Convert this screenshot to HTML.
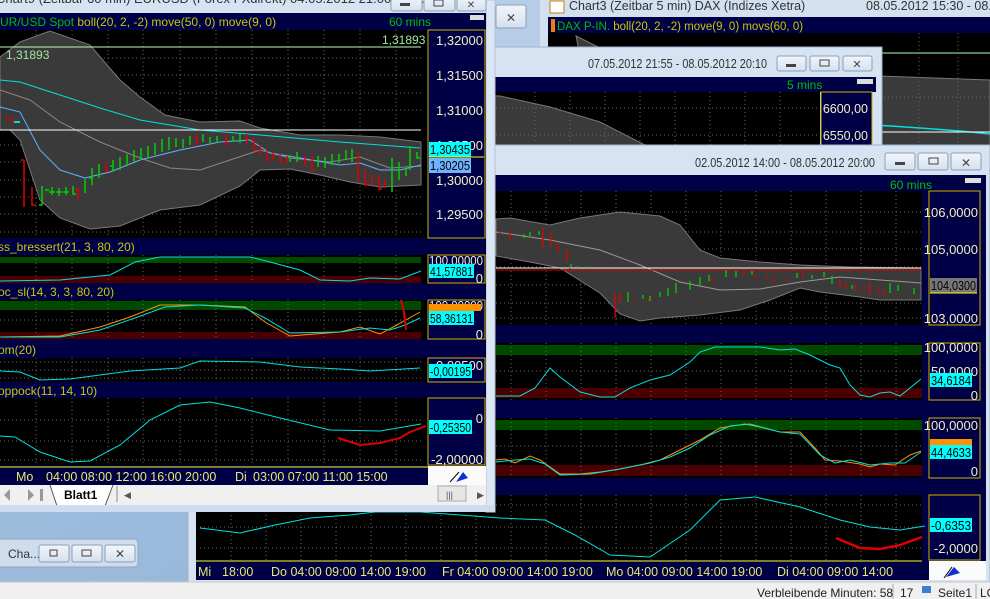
<!DOCTYPE html>
<html><head><meta charset="utf-8"><style>
html,body{margin:0;padding:0;width:990px;height:599px;overflow:hidden;background:#9fbddc}
svg{display:block;font-family:"Liberation Sans",sans-serif}
</style></head><body>
<svg width="990" height="599" viewBox="0 0 990 599" xmlns="http://www.w3.org/2000/svg">
<defs>
<linearGradient id="desk" x1="0" y1="0" x2="1" y2="1"><stop offset="0" stop-color="#a9c5e3"/><stop offset="1" stop-color="#8fb0d4"/></linearGradient>
<linearGradient id="btn" x1="0" y1="0" x2="0" y2="1"><stop offset="0" stop-color="#f2f6fb"/><stop offset="1" stop-color="#d5e0ee"/></linearGradient>
</defs>
<rect width="990" height="599" fill="url(#desk)"/>

<!-- Chart3 window (back) -->
<rect x="540" y="0" width="450" height="150" fill="#d3e0f0"/>
<rect x="495" y="0" width="45" height="50" fill="#b7cce6"/>
<rect x="496" y="5" width="30" height="23" rx="2" fill="url(#btn)" stroke="#8a9fba"/>
<text x="511" y="22" font-size="12" text-anchor="middle" fill="#444">✕</text>
<text x="569" y="10" font-size="12.5" fill="#333">Chart3 (Zeitbar 5 min)  DAX (Indizes Xetra)</text>
<rect x="550" y="1" width="14" height="12" fill="#fff" stroke="#c08000"/>
<text x="866" y="10" font-size="12.5" fill="#333">08.05.2012 15:30 - 08.05</text>
<rect x="548" y="17" width="442" height="16" fill="#000046"/>
<rect x="551" y="19" width="4" height="13" fill="#f08000"/>
<text x="557" y="30" font-size="11.5" fill="#00c000">DAX P-IN. <tspan fill="#c8c800">boll(20, 2, -2) move(9, 0) movs(60, 0)</tspan></text>
<rect x="548" y="33" width="442" height="117" fill="#000"/>
<path d="M576 36 L600 48 L650 60 L880 76 L990 80 V150 H600 Z" fill="#3a3a3a" stroke="#777"/>
<line x1="876" y1="53" x2="990" y2="53" stroke="#b0ffb0"/>
<path d="M876 125 L920 128 L960 131 L990 134" stroke="#00e0e0" stroke-width="1.5" fill="none"/>
<line x1="876" y1="132" x2="990" y2="132" stroke="#fff"/>
<g stroke="#666" stroke-dasharray="1,3"><line x1="919" y1="33" x2="919" y2="150"/><line x1="958" y1="33" x2="958" y2="150"/><line x1="876" y1="97" x2="990" y2="97"/></g>

<!-- Window 2 -->
<rect x="190" y="47" width="692" height="105" fill="#d6e3f2" stroke="#9fb3cc"/>
<text x="767" y="68" font-size="12.5" fill="#333" text-anchor="end" textLength="179" lengthAdjust="spacingAndGlyphs">07.05.2012 21:55 - 08.05.2012 20:10</text>
<g><rect x="777" y="56" width="29" height="15" rx="2" fill="url(#btn)" stroke="#8a9fba"/><rect x="810" y="56" width="29" height="15" rx="2" fill="url(#btn)" stroke="#8a9fba"/><rect x="843" y="56" width="29" height="15" rx="2" fill="url(#btn)" stroke="#8a9fba"/>
<rect x="786" y="64" width="10" height="3" fill="#444"/><rect x="820" y="60" width="9" height="6" fill="none" stroke="#444"/><text x="857" y="68" font-size="11" text-anchor="middle" fill="#444">✕</text></g>
<rect x="196" y="77" width="680" height="15" fill="#000046"/>
<text x="787" y="89" font-size="12" fill="#00c000">5 mins</text>
<rect x="857" y="79" width="16" height="5" fill="#ddd"/>
<rect x="196" y="92" width="624" height="58" fill="#000"/>
<path d="M196 90 L500 96 L550 107 L600 122 L645 145 L640 150 H196 Z" fill="#3a3a3a" stroke="#777"/>
<g stroke="#666" stroke-dasharray="1,3"><line x1="535" y1="92" x2="535" y2="150"/><line x1="570" y1="92" x2="570" y2="150"/><line x1="605" y1="92" x2="605" y2="150"/><line x1="640" y1="92" x2="640" y2="150"/><line x1="675" y1="92" x2="675" y2="150"/><line x1="710" y1="92" x2="710" y2="150"/><line x1="745" y1="92" x2="745" y2="150"/><line x1="780" y1="92" x2="780" y2="150"/><line x1="496" y1="108" x2="820" y2="108"/><line x1="496" y1="135" x2="820" y2="135"/></g>
<rect x="821" y="92" width="51" height="58" fill="#000046" stroke="#d0b000"/>
<text x="868" y="113" font-size="12.5" fill="#f0f0c0" text-anchor="end">6600,00</text>
<text x="868" y="140" font-size="12.5" fill="#f0f0c0" text-anchor="end">6550,00</text>

<!-- Front-right window -->
<rect x="188" y="145" width="802" height="437" fill="#d6e3f2" stroke="#9fb3cc"/>
<text x="875" y="167" font-size="12.5" fill="#333" text-anchor="end" textLength="180" lengthAdjust="spacingAndGlyphs">02.05.2012 14:00 - 08.05.2012 20:00</text>
<g><rect x="885" y="153" width="30" height="17" rx="2" fill="url(#btn)" stroke="#8a9fba"/><rect x="918" y="153" width="30" height="17" rx="2" fill="url(#btn)" stroke="#8a9fba"/><rect x="951" y="153" width="30" height="17" rx="2" fill="url(#btn)" stroke="#8a9fba"/>
<rect x="895" y="162" width="10" height="3" fill="#444"/><rect x="929" y="158" width="9" height="6" fill="none" stroke="#444"/><text x="966" y="167" font-size="12" text-anchor="middle" fill="#444">✕</text></g>
<rect x="196" y="175" width="790" height="405" fill="#000046"/>
<text x="890" y="189" font-size="12" fill="#00c000">60 mins</text>
<rect x="965" y="178" width="16" height="5" fill="#ddd"/>
<rect x="196" y="191" width="726" height="134" fill="#000"/>
<rect x="196" y="343" width="726" height="57" fill="#000"/>
<rect x="196" y="418" width="726" height="60" fill="#000"/>
<rect x="196" y="495" width="726" height="65" fill="#000"/>
<rect x="496" y="345" width="426" height="10" fill="#004a00"/><rect x="496" y="388" width="426" height="10" fill="#4a0000"/>
<rect x="496" y="420" width="426" height="10" fill="#004a00"/><rect x="496" y="465" width="426" height="11" fill="#4a0000"/>
<g stroke="#666" stroke-dasharray="1,3">
<path d="M511 191V325M546 191V325M581 191V325M616 191V325M651 191V325M686 191V325M721 191V325M756 191V325M791 191V325M826 191V325M861 191V325M896 191V325 M496 212H922M496 232H922M496 249H922M496 267H922M496 285H922M496 303H922M496 318H922"/>
<path d="M511 343V400M546 343V400M581 343V400M616 343V400M651 343V400M686 343V400M721 343V400M756 343V400M791 343V400M826 343V400M861 343V400M896 343V400M496 371H922"/>
<path d="M511 418V478M546 418V478M581 418V478M616 418V478M651 418V478M686 418V478M721 418V478M756 418V478M791 418V478M826 418V478M861 418V478M896 418V478M496 446H922"/>
<path d="M231 495V560M266 495V560M301 495V560M336 495V560M371 495V560M406 495V560M441 495V560M476 495V560M511 495V560M546 495V560M581 495V560M616 495V560M651 495V560M686 495V560M721 495V560M756 495V560M791 495V560M826 495V560M861 495V560M896 495V560M200 505H922M200 527H922M200 548H922"/>
</g>
<path d="M496 219 L510 218 L550 225 L580 218 L620 212 L660 216 L680 225 L700 250 L720 258 L760 262 L800 265 L850 267 L921 268 L921 300 L880 300 L860 297 L820 292 L800 288 L770 300 L740 310 L700 315 L660 318 L640 321 L620 314 L600 293 L560 268 L530 262 L496 256 Z" fill="#3a3a3a" stroke="#777"/>
<path d="M496 232 L550 240 L600 250 L640 265 L680 282 L720 290 L760 289 L800 282 L840 277 L880 280 L921 283" stroke="#999" fill="none"/>
<line x1="496" y1="268" x2="921" y2="268" stroke="#fff"/>
<line x1="496" y1="270" x2="921" y2="270" stroke="#e00000"/>
<path stroke="#e00000" stroke-width="1.3" fill="none" d="M500 231v3M510 231v8M543 228v20M551 233v14M558 243v10M567 250v12M570 268v3M615 293v25M620 293v10M628 295v6M634 298v3M649 299v3M712 278v5M743 273v3M755 274v4M767 276v3M773 277v5M786 278v3M803 272v5M840 280v8M846 283v6M855 283v8M864 286v5M870 283v12M878 287v6M884 290v6"/>
<path stroke="#00d000" stroke-width="1.3" fill="none" d="M524 234v4M530 232v4M539 231v4M571 264v3M578 266v2M587 266v2M628 292v10M643 295v4M650 296v5M660 292v5M668 288v8M676 283v10M690 281v9M700 277v8M709 275v6M726 270v7M736 271v6M752 271v4M797 273v5M812 275v4M824 272v5M832 276v8M852 285v4M890 283v10M898 285v6M914 288v6"/>
<path d="M496 396 L520 396 L535 388 L550 368 L560 377 L580 392 L600 397 L615 397 L630 388 L650 380 L670 375 L690 362 L700 352 L715 347 L760 347 L780 350 L795 349 L810 355 L830 365 L840 368 L850 385 L860 395 L870 397 L880 393 L890 392 L900 396 L921 379" stroke="#00e0e0" fill="none"/>
<path d="M496 460 L505 459 L515 463 L530 456 L540 460 L560 474 L580 474 L600 472 L620 469 L640 465 L660 460 L680 450 L700 440 L720 428 L745 424 L760 427 L780 432 L800 432 L815 448 L825 460 L840 461 L860 464 L870 467 L880 464 L895 465 L910 455 L921 451" stroke="#ff9000" fill="none"/>
<path d="M496 462 L515 460 L530 459 L545 464 L560 475 L590 474 L620 469 L650 463 L670 457 L690 448 L710 435 L730 426 L750 424 L780 432 L800 434 L820 455 L835 463 L850 460 L870 465 L890 463 L905 463 L921 452" stroke="#00e0e0" fill="none"/>
<path d="M200 528 L240 533 L275 525 L310 518 L350 515 L375 512 L420 512 L460 515 L500 518 L545 520 L575 535 L610 555 L650 557 L690 530 L720 500 L755 497 L800 507 L840 520 L870 527 L900 530 L925 526" stroke="#00e0e0" fill="none"/>
<path d="M836 538 L860 548 L880 549 L900 545 L922 537" stroke="#e00000" stroke-width="2.5" fill="none"/>
<g fill="#000046" stroke="#d0b000"><rect x="929" y="191" width="51" height="134"/><rect x="929" y="343" width="51" height="57"/><rect x="929" y="418" width="51" height="60"/><rect x="929" y="495" width="51" height="65"/></g>
<g font-size="13" fill="#f0f0c0" text-anchor="end">
<text x="978" y="217">106,0000</text><text x="978" y="254">105,0000</text><text x="978" y="323">103,0000</text>
<text x="978" y="352">100,0000</text><text x="978" y="376">50,0000</text><text x="978" y="400">0</text>
<text x="978" y="430">100,0000</text><text x="978" y="476">0</text><text x="978" y="553">-2,0000</text></g>
<rect x="930" y="278" width="47" height="15" fill="#777"/><line x1="930" y1="293" x2="977" y2="293" stroke="#ff0"/>
<text x="931" y="290" font-size="13" fill="#000" textLength="45" lengthAdjust="spacingAndGlyphs">104,0300</text>
<rect x="930" y="373" width="42" height="14" fill="#00ffff"/><text x="931" y="385" font-size="13" fill="#000" textLength="40" lengthAdjust="spacingAndGlyphs">34,6184</text>
<rect x="930" y="439" width="42" height="8" fill="#ff9000"/>
<rect x="930" y="445" width="42" height="14" fill="#00ffff"/><text x="931" y="457" font-size="13" fill="#000" textLength="40" lengthAdjust="spacingAndGlyphs">44,4633</text>
<rect x="930" y="518" width="42" height="14" fill="#00ffff"/><text x="931" y="530" font-size="13" fill="#000" textLength="40" lengthAdjust="spacingAndGlyphs">-0,6353</text>
<line x1="196" y1="561" x2="922" y2="561" stroke="#ff0"/>
<g font-size="12.5" fill="#e8e870"><text x="198" y="576">Mi</text><text x="222" y="576">18:00</text><text x="271" y="576">Do 04:00 09:00 14:00 19:00</text><text x="442" y="576">Fr  04:00 09:00 14:00 19:00</text><text x="606" y="576">Mo 04:00 09:00 14:00 19:00</text><text x="777" y="576">Di  04:00 09:00 14:00</text></g>
<rect x="929" y="561" width="57" height="19" fill="#fafafa"/>
<path d="M946 577 L954 567 L960 573 Z" fill="#1030d0"/><line x1="944" y1="578" x2="952" y2="567" stroke="#000"/>

<!-- minimized -->
<rect x="-5" y="539" width="143" height="28" rx="4" fill="#cfdcec" stroke="#8fa5c0"/>
<text x="8" y="558" font-size="12" fill="#333">Cha...</text>
<rect x="39" y="545" width="30" height="17" rx="2" fill="url(#btn)" stroke="#8a9fba"/><rect x="72" y="545" width="30" height="17" rx="2" fill="url(#btn)" stroke="#8a9fba"/><rect x="105" y="545" width="30" height="17" rx="2" fill="url(#btn)" stroke="#8a9fba"/>
<rect x="50" y="550" width="7" height="6" fill="none" stroke="#444"/><rect x="82" y="550" width="9" height="6" fill="none" stroke="#444"/><text x="120" y="558" font-size="12" text-anchor="middle" fill="#444">✕</text>

<!-- Left window -->
<rect x="0" y="0" width="495" height="512" fill="#d6e3f2"/>
<rect x="486" y="0" width="9" height="512" fill="#dce7f4" stroke="#b0c2d8"/>
<text x="-4" y="3" font-size="13" fill="#333">Chart9 (Zeitbar 60 min)  EURUSD (Forex FXdirekt) 04.05.2012 21:00 - 08....</text>
<g><rect x="391" y="-4" width="31" height="15" rx="2" fill="url(#btn)" stroke="#8a9fba"/><rect x="424" y="-4" width="31" height="15" rx="2" fill="url(#btn)" stroke="#8a9fba"/><rect x="457" y="-4" width="29" height="15" rx="2" fill="url(#btn)" stroke="#8a9fba"/>
<rect x="400" y="3" width="10" height="3" fill="#444"/><rect x="434" y="0" width="9" height="6" fill="none" stroke="#444"/><text x="471" y="8" font-size="10" text-anchor="middle" fill="#444">✕</text></g>
<rect x="0" y="13" width="486" height="472" fill="#000046"/>
<text x="0" y="26" font-size="12" fill="#00c000">UR/USD Spot <tspan fill="#c8c800">boll(20, 2, -2) move(50, 0) move(9, 0)</tspan></text>
<text x="389" y="26" font-size="12" fill="#00c000">60 mins</text>
<rect x="470" y="15" width="14" height="5" fill="#ddd"/>
<rect x="0" y="30" width="428" height="208" fill="#000"/>
<rect x="0" y="255" width="428" height="28" fill="#000"/>
<rect x="0" y="300" width="428" height="39" fill="#000"/>
<rect x="0" y="358" width="428" height="24" fill="#000"/>
<rect x="0" y="398" width="428" height="67" fill="#000"/>
<rect x="0" y="257" width="421" height="6" fill="#004a00"/><rect x="0" y="276" width="421" height="7" fill="#4a0000"/>
<rect x="0" y="301" width="421" height="9" fill="#004a00"/><rect x="0" y="332" width="421" height="7" fill="#4a0000"/>
<g stroke="#666" stroke-dasharray="1,3">
<path d="M36 30V238M72 30V238M108 30V238M143 30V238M180 30V238M216 30V238M252 30V238M288 30V238M324 30V238M360 30V238M396 30V238M0 58H421M0 75H421M0 93H421M0 110H421M0 145H421M0 162H421M0 180H421M0 197H421M0 214H421M0 232H421"/>
<path d="M36 255V283M72 255V283M108 255V283M143 255V283M180 255V283M216 255V283M252 255V283M288 255V283M324 255V283M360 255V283M396 255V283"/>
<path d="M36 300V339M72 300V339M108 300V339M143 300V339M180 300V339M216 300V339M252 300V339M288 300V339M324 300V339M360 300V339M396 300V339M0 320H421"/>
<path d="M36 358V382M72 358V382M108 358V382M143 358V382M180 358V382M216 358V382M252 358V382M288 358V382M324 358V382M360 358V382M396 358V382M0 362H421M0 370H421M0 378H421"/>
<path d="M36 398V465M72 398V465M108 398V465M143 398V465M180 398V465M216 398V465M252 398V465M288 398V465M324 398V465M360 398V465M396 398V465M0 420H421M0 441H421M0 460H421"/>
</g>
<path d="M0 57 L20 42 L50 31 L90 45 L120 80 L140 97 L165 115 L200 122 L240 121 L260 128 L300 135 L340 135 L380 137 L421 142 L421 185 L400 186 L380 187 L350 182 L320 175 L290 169 L260 170 L240 186 L200 205 L160 210 L120 226 L90 229 L60 218 L40 200 L20 140 L10 130 L0 130 Z" fill="#3a3a3a" stroke="#777"/>
<line x1="0" y1="47" x2="421" y2="47" stroke="#b0ffb0"/>
<text x="382" y="44" font-size="12" fill="#a0e8a0">1,31893</text><text x="6" y="59" font-size="12" fill="#a0e8a0">1,31893</text>
<path d="M0 90 L30 100 L60 122 L100 142 L140 158 L170 168 L200 170 L230 160 L260 150 L290 158 L330 162 L360 157 L390 168 L421 166" stroke="#888" fill="none"/>
<path d="M0 80 L20 82 L60 95 L100 108 L140 120 L200 130 L260 135 L340 142 L420 148" stroke="#00e0e0" fill="none"/>
<path d="M0 107 L20 112 L40 150 L60 170 L85 178 L110 172 L140 160 L180 150 L220 142 L250 140 L270 153 L300 158 L340 165 L360 163 L380 170 L400 170 L421 165" stroke="#5ab4ff" fill="none"/>
<line x1="0" y1="130" x2="421" y2="130" stroke="#fff"/>
<path stroke="#e00000" stroke-width="1.5" fill="none" d="M5 118h4M12 117v5h3M24 160v47M21 160h3M32 187v18h4M78 188v12M75 190h3M106 162v9h3M197 136v10M194 137h3M226 134v10h3M247 134v11M254 137v13h3M260 145v10M267 150v10h3M273 152v8M280 153v9h3M287 156v7M305 156v10M312 155v15h3M358 152v30M365 170v15h3M372 175v10M379 175v14h3M385 180v8"/>
<path stroke="#00d000" stroke-width="1.5" fill="none" d="M42 186v19h-3M45 190h4M52 187v8M49 192h6M59 188v8M56 192h6M66 187v8M63 192h6M73 186v8h3M85 179v14M92 168v17M89 178h3M99 164v14M113 160v12M110 166h3M120 157v13M127 154v11M134 150v12M141 148v12M148 146v12M155 143v12M162 139v13M169 137v13M176 138v9M183 139v9M190 136v9M203 134v8M210 137v6M217 136v7M233 136v6M240 134v9M290 155v7M297 152v10M318 156v11M325 157v11M332 154v11M339 154v9M346 150v10M352 149v13M392 158v34M399 162v18M406 168v8M410 146v24M417 152v6h3"/>
<path d="M14 122h6" stroke="#00e0e0" stroke-width="2"/>
<g font-size="12" fill="#c8c800"><text x="-2" y="251">ss_bressert(21, 3, 80, 20)</text><text x="-2" y="296">oc_sl(14, 3, 3, 80, 20)</text><text x="-2" y="354">om(20)</text><text x="-2" y="395">oppock(11, 14, 10)</text></g>
<path d="M0 281 L60 280 L110 275 L135 262 L160 257 L250 257 L270 262 L300 270 L320 280 L350 281 L370 278 L400 279 L421 271" stroke="#00e0e0" fill="none"/>
<path d="M0 337 L60 336 L100 327 L130 317 L160 305 L200 305 L245 307 L265 322 L290 336 L340 332 L360 327 L380 334 L395 326 L420 312" stroke="#ff9000" fill="none"/>
<path d="M0 337 L60 337 L100 330 L135 318 L165 307 L200 305 L245 308 L265 318 L290 333 L340 332 L370 328 L390 330 L405 325 L420 318" stroke="#00e0e0" fill="none"/>
<path d="M401 300 L404 312 L406 330" stroke="#e00000" stroke-width="2" fill="none"/>
<path d="M0 371 L20 372 L40 380 L70 379 L100 375 L130 371 L180 368 L200 361 L260 362 L300 367 L340 369 L370 371 L420 368" stroke="#00e0e0" fill="none"/>
<path d="M0 436 L15 437 L40 452 L70 462 L90 461 L120 445 L150 420 L180 405 L210 402 L240 408 L280 418 L330 430 L380 431 L421 424" stroke="#00e0e0" fill="none"/>
<path d="M338 438 L360 445 L380 443 L400 438 L410 432 L426 426" stroke="#e00000" stroke-width="2" fill="none"/>
<g fill="#000046" stroke="#d0b000"><rect x="428" y="30" width="57" height="208"/><rect x="428" y="255" width="57" height="28"/><rect x="428" y="300" width="57" height="39"/><rect x="428" y="358" width="57" height="24"/><rect x="428" y="398" width="57" height="67"/></g>
<g font-size="13" fill="#f0f0c0" text-anchor="end"><text x="483" y="45">1,32000</text><text x="483" y="80">1,31500</text><text x="483" y="115">1,31000</text><text x="483" y="150">1,30500</text><text x="483" y="185">1,30000</text><text x="483" y="219">1,29500</text>
<text x="483" y="265" textLength="54" lengthAdjust="spacingAndGlyphs">100,00000</text><text x="483" y="283">0</text><text x="483" y="310" textLength="54" lengthAdjust="spacingAndGlyphs">100,00000</text><text x="483" y="339">0</text><text x="483" y="370">0,00500</text><text x="483" y="423">0</text><text x="483" y="464" textLength="52" lengthAdjust="spacingAndGlyphs">-2,00000</text></g>
<rect x="429" y="142" width="42" height="15" fill="#00ffff"/><text x="430" y="154" font-size="13" fill="#000" textLength="40" lengthAdjust="spacingAndGlyphs">1,30435</text>
<line x1="429" y1="157" x2="484" y2="157" stroke="#ff0"/>
<rect x="429" y="158" width="42" height="15" fill="#6fb4ff"/><text x="430" y="170" font-size="13" fill="#000" textLength="40" lengthAdjust="spacingAndGlyphs">1,30205</text>
<rect x="429" y="264" width="45" height="14" fill="#00ffff"/><text x="430" y="276" font-size="13" fill="#000" textLength="43" lengthAdjust="spacingAndGlyphs">41,57881</text>
<rect x="429" y="304" width="52" height="7" fill="#ff9000"/>
<rect x="429" y="311" width="45" height="14" fill="#00ffff"/><text x="430" y="323" font-size="13" fill="#000" textLength="43" lengthAdjust="spacingAndGlyphs">58,36131</text>
<rect x="429" y="364" width="43" height="14" fill="#00ffff"/><text x="430" y="376" font-size="13" fill="#000" textLength="41" lengthAdjust="spacingAndGlyphs">-0,00195</text>
<rect x="429" y="420" width="43" height="14" fill="#00ffff"/><text x="430" y="432" font-size="13" fill="#000" textLength="41" lengthAdjust="spacingAndGlyphs">-0,25350</text>
<line x1="0" y1="467" x2="428" y2="467" stroke="#ff0"/>
<g font-size="12.5" fill="#e8e870"><text x="16" y="481">Mo</text><text x="46" y="481">04:00 08:00 12:00 16:00 20:00</text><text x="235" y="481">Di</text><text x="253" y="481">03:00 07:00 11:00 15:00</text></g>
<rect x="428" y="466" width="58" height="19" fill="#fafafa"/>
<path d="M456 482 L463 472 L468 478 Z" fill="#1030d0"/><line x1="450" y1="482" x2="459" y2="472" stroke="#000"/>
<rect x="0" y="485" width="486" height="20" fill="#f0f0f0"/>
<g fill="#999"><path d="M4 495 L10 489 V501 Z"/><path d="M28 489 L34 495 L28 501 Z"/><path d="M40 489 V501 H43 V489Z"/></g>
<path d="M50 485 L57 506 H105 L113 485" fill="#fff" stroke="#555"/>
<text x="64" y="499" font-size="12" font-weight="bold" fill="#000">Blatt1</text>
<line x1="117" y1="486" x2="117" y2="502" stroke="#888"/>
<text x="124" y="498" font-size="9" fill="#555">◀</text>
<rect x="438" y="486" width="28" height="15" fill="#e6e6e6" stroke="#aaa"/><text x="446" y="498" font-size="9" fill="#555">|||</text>
<text x="477" y="498" font-size="9" fill="#555">▶</text>
<rect x="0" y="505" width="495" height="7" fill="#cddcee"/>

<!-- status bar -->
<rect x="0" y="582" width="990" height="17" fill="#f0f0f0"/><line x1="0" y1="582" x2="990" y2="582" stroke="#c8c8c8"/>
<text x="757" y="597" font-size="12" fill="#222">Verbleibende Minuten: 58</text>
<line x1="893" y1="584" x2="893" y2="599" stroke="#aaa"/>
<text x="900" y="597" font-size="12" fill="#222">17</text>
<rect x="922" y="586" width="9" height="7" fill="#3a7fd0"/>
<text x="938" y="597" font-size="12" fill="#222">Seite1</text>
<line x1="976" y1="584" x2="976" y2="599" stroke="#aaa"/>
<text x="980" y="597" font-size="12" fill="#222">LO</text>
</svg>
</body></html>
